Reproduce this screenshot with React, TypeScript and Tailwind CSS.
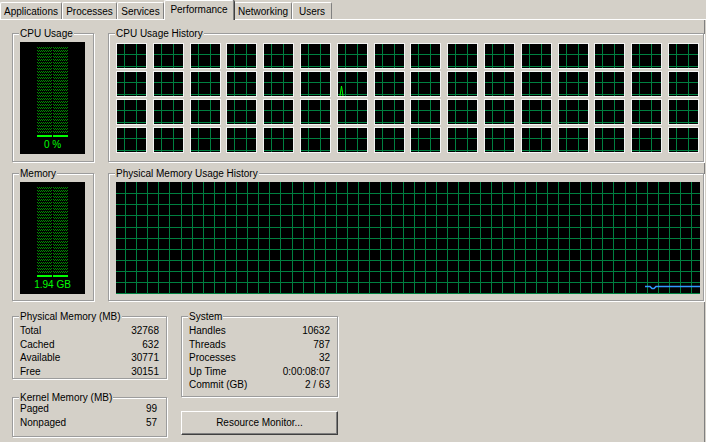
import React from "react";

function GroupBox({
  label,
  className,
  children,
}: {
  label: string;
  className?: string;
  children?: React.ReactNode;
}) {
  return (
    <div
      className={`relative border border-[#9c9c9c] shadow-[inset_1px_1px_0_#ffffff,1px_1px_0_#ffffff] ${className ?? ""}`}
    >
      <span className="absolute left-[6px] top-[-6px] bg-[#d4d0c8] px-px leading-[12px] whitespace-nowrap">
        {label}
      </span>
      {children}
    </div>
  );
}

function LedMeter({ id, text }: { id: string; text: string }) {
  return (
    <div className="w-[65px] h-[112px] bg-black flex flex-col items-center pt-[5px]">
      <svg width="31" height="90" shapeRendering="crispEdges" className="block">
        <defs>
          <pattern id={id} width="2" height="3" patternUnits="userSpaceOnUse">
            <rect x="0" y="0" width="1" height="1" fill="#008c00" />
            <rect x="1" y="1" width="1" height="1" fill="#008c00" />
          </pattern>
        </defs>
        <rect x="0" y="0" width="15" height="87" fill={`url(#${id})`} />
        <rect x="16" y="0" width="15" height="87" fill={`url(#${id})`} />
        <rect x="0" y="88" width="15" height="2" fill="#00ff00" />
        <rect x="16" y="88" width="15" height="2" fill="#00ff00" />
      </svg>
      <div className="mt-[2px] text-[#00ff00] leading-[12px] whitespace-nowrap">{text}</div>
    </div>
  );
}

const GRID = "#008040";

function CpuCell({ spike }: { spike?: boolean }) {
  const xs = [7, 19, 30];
  const ys = [10, 22];
  return (
    <div className="bg-black border border-[#f4f4f4] overflow-hidden">
      <svg className="block w-full h-full" shapeRendering="crispEdges">
        {xs.map((x) => (
          <line key={"x" + x} x1={x + 0.5} y1={0} x2={x + 0.5} y2={40} stroke={GRID} strokeWidth={1} />
        ))}
        {ys.map((y) => (
          <line key={"y" + y} x1={0} y1={y + 0.5} x2={40} y2={y + 0.5} stroke={GRID} strokeWidth={1} />
        ))}
        {spike && (
          <polyline
            points="2,24 3.5,14 5,24"
            fill="none"
            stroke="#00ff00"
            strokeWidth={1}
            shapeRendering="auto"
          />
        )}
      </svg>
    </div>
  );
}

function MemHistory() {
  const w = 584;
  const h = 112;
  const xs: number[] = [];
  for (let i = 0; 9 + i * 11.1 < w; i++) xs.push(Math.round(9 + i * 11.1));
  const ys: number[] = [];
  for (let i = 0; 11.2 + i * 11.1 < h; i++) ys.push(Math.round(11.2 + i * 11.1));
  return (
    <div className="w-[584px] h-[112px] bg-black">
      <svg width={w} height={h} className="block" shapeRendering="crispEdges">
        {xs.map((x) => (
          <line key={"x" + x} x1={x + 0.5} y1={0} x2={x + 0.5} y2={h} stroke={GRID} />
        ))}
        {ys.map((y) => (
          <line key={"y" + y} x1={0} y1={y + 0.5} x2={w} y2={y + 0.5} stroke={GRID} />
        ))}
        <polyline
          points="529,104.5 534,104.5 536,106.5 538,106.5 540,104.5 584,104.5"
          fill="none"
          stroke="#3399ff"
          strokeWidth={1.5}
          shapeRendering="auto"
        />
      </svg>
    </div>
  );
}

const tabs: [string, number][] = [
  ["Applications", 62],
  ["Processes", 55],
  ["Services", 47],
  ["Performance", 70],
  ["Networking", 58],
  ["Users", 40],
];

function Tabs() {
  return (
    <div className="flex items-end h-[20px] border-b border-white">
      {tabs.map(([name, w]) =>
        name === "Performance" ? (
          <div
            key={name}
            style={{ width: w }}
            className="relative z-10 -mb-px h-[20px] bg-[#d4d0c8] border-l border-t border-white border-r border-r-[#808080] shadow-[1px_0_0_#404040] rounded-t-[2px] flex items-start justify-center pt-[3px] leading-[12px]"
          >
            {name}
          </div>
        ) : (
          <div
            key={name}
            style={{ width: w }}
            className="h-[17px] border-l border-t border-white border-r border-r-[#808080] rounded-t-[2px] flex items-start justify-center pt-[3px] leading-[12px]"
          >
            {name}
          </div>
        )
      )}
    </div>
  );
}

function Rows({ rows }: { rows: [string, string][] }) {
  return (
    <>
      {rows.map(([k, v]) => (
        <div key={k} className="flex justify-between">
          <span>{k}</span>
          <span>{v}</span>
        </div>
      ))}
    </>
  );
}

export default function App() {
  const cells = Array.from({ length: 64 }, (_, i) => i);
  return (
    <div className="w-[706px] h-[442px] bg-[#d4d0c8] overflow-hidden text-[10px] text-black font-['Liberation_Sans',Arial,sans-serif]">
      <Tabs />
      <div className="h-[422px] pl-[12px] pt-[13px] border-r border-r-[#808080] mr-px">
        {/* Row 1 */}
        <div className="flex gap-[14px] h-[129px]">
          <GroupBox label="CPU Usage" className="w-[82px] h-[129px] pl-[7px] pt-[8px]">
            <LedMeter id="ledcpu" text="0 %" />
          </GroupBox>
          <GroupBox label="CPU Usage History" className="w-[596px] h-[129px] pl-[7px] pt-[9px]">
            <div className="w-[583px] grid grid-cols-[repeat(16,31px)] grid-rows-[repeat(4,26px)] justify-between gap-y-[2px]">
              {cells.map((i) => (
                <CpuCell key={i} spike={i === 22} />
              ))}
            </div>
          </GroupBox>
        </div>
        {/* Row 2 */}
        <div className="flex gap-[14px] h-[128px] mt-[11px]">
          <GroupBox label="Memory" className="w-[82px] h-[128px] pl-[7px] pt-[8px]">
            <LedMeter id="ledmem" text="1.94 GB" />
          </GroupBox>
          <GroupBox label="Physical Memory Usage History" className="w-[596px] h-[128px] pl-[7px] pt-[8px]">
            <MemHistory />
          </GroupBox>
        </div>
        {/* Row 3 */}
        <div className="flex gap-[14px] mt-[15px]">
          <div className="flex flex-col">
            <GroupBox label="Physical Memory (MB)" className="w-[155px] h-[63px] pt-[7px] pl-[7px] pr-[7px] leading-[13.5px]">
              <Rows
                rows={[
                  ["Total", "32768"],
                  ["Cached", "632"],
                  ["Available", "30771"],
                  ["Free", "30151"],
                ]}
              />
            </GroupBox>
            <GroupBox label="Kernel Memory (MB)" className="mt-[18px] w-[155px] h-[40px] pt-[4px] pl-[7px] pr-[9px] leading-[14px]">
              <Rows
                rows={[
                  ["Paged", "99"],
                  ["Nonpaged", "57"],
                ]}
              />
            </GroupBox>
          </div>
          <div className="flex flex-col">
            <GroupBox label="System" className="w-[157px] h-[81px] pt-[7px] pl-[7px] pr-[7px] leading-[13.5px]">
              <Rows
                rows={[
                  ["Handles", "10632"],
                  ["Threads", "787"],
                  ["Processes", "32"],
                  ["Up Time", "0:00:08:07"],
                  ["Commit (GB)", "2 / 63"],
                ]}
              />
            </GroupBox>
            <button className="mt-[14px] w-[157px] h-[24px] bg-[#d4d0c8] border border-t-white border-l-white border-r-[#404040] border-b-[#404040] shadow-[inset_-1px_-1px_0_#808080] flex items-center justify-center leading-[12px]">
              Resource Monitor...
            </button>
          </div>
        </div>
      </div>
    </div>
  );
}
